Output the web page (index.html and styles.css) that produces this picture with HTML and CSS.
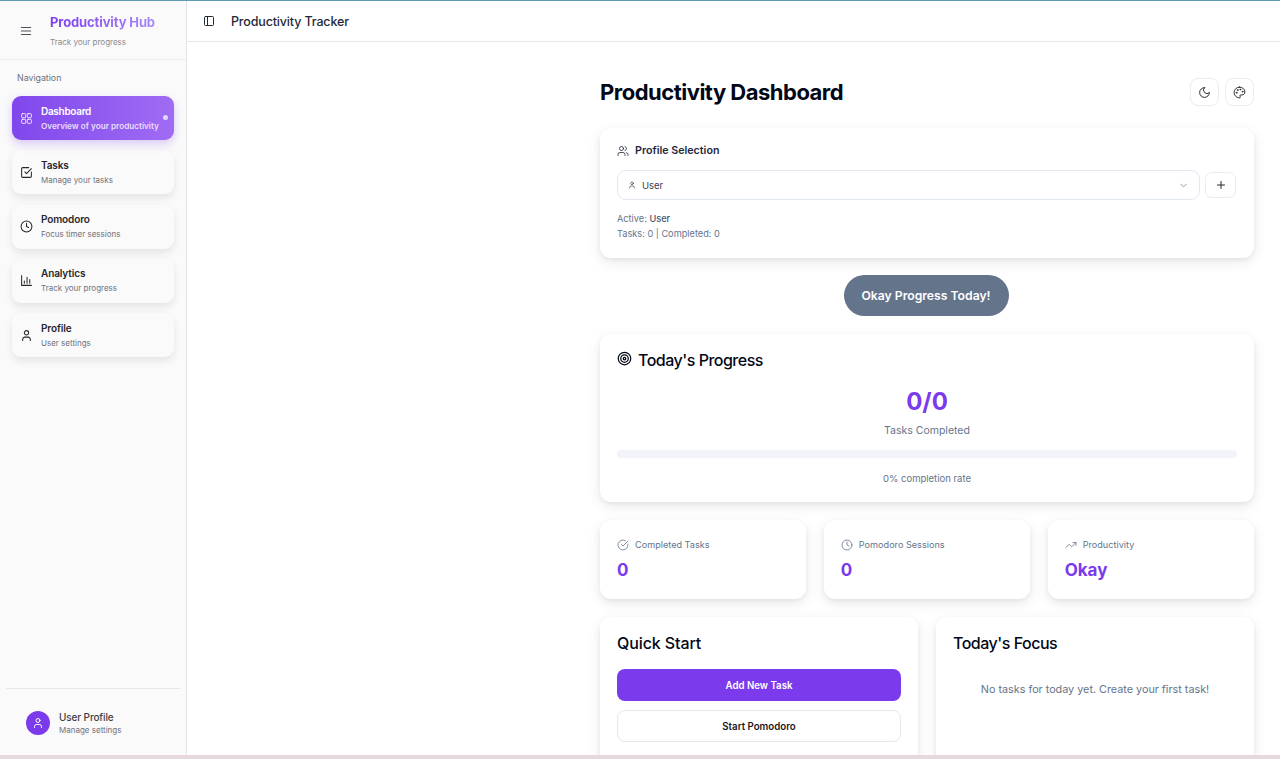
FILE: index.html
```html
<!DOCTYPE html>
<html lang="en">
  <head>
    <meta charset="UTF-8" />
    <meta name="viewport" content="width=device-width, initial-scale=1.0" />
    <title>Productivity Tracker</title>
    <link rel="stylesheet" href="styles.css">
  </head>
  <body>
    <div class="app">
      <aside class="sidebar">
        <div class="brand">
          <svg class="icon brand-menu" viewBox="0 0 24 24"><path d="M4 6h16M4 12h16M4 18h16"/></svg>
          <div>
            <div class="brand-name">Productivity Hub</div>
            <div class="brand-sub">Track your progress</div>
          </div>
        </div>

        <div class="nav-label">Navigation</div>
        <nav class="nav">
          <a href="#" class="nav-item active">
            <svg class="icon" viewBox="0 0 24 24"><rect x="3" y="3" width="7.500" height="7.500" rx="1.500"/><rect x="13.500" y="3" width="7.500" height="7.500" rx="1.500"/><rect x="13.500" y="13.500" width="7.500" height="7.500" rx="1.500"/><rect x="3" y="13.500" width="7.500" height="7.500" rx="1.500"/></svg>
            <span class="nav-text"><b>Dashboard</b><small>Overview of your productivity</small></span>
            <i class="nav-dot"></i>
          </a>
          <a href="#" class="nav-item">
            <svg class="icon" viewBox="0 0 24 24"><path d="M21 11v8a2 2 0 0 1-2 2H5a2 2 0 0 1-2-2V5a2 2 0 0 1 2-2h11"/><path d="m9 11 3 3 9-9"/></svg>
            <span class="nav-text"><b>Tasks</b><small>Manage your tasks</small></span>
          </a>
          <a href="#" class="nav-item">
            <svg class="icon" viewBox="0 0 24 24"><circle cx="12" cy="12" r="10"/><path d="M12 6v6l4 2"/></svg>
            <span class="nav-text"><b>Pomodoro</b><small>Focus timer sessions</small></span>
          </a>
          <a href="#" class="nav-item">
            <svg class="icon" viewBox="0 0 24 24"><path d="M3 3v18h18"/><path d="M8 17v-4M13 17V6M18 17v-7"/></svg>
            <span class="nav-text"><b>Analytics</b><small>Track your progress</small></span>
          </a>
          <a href="#" class="nav-item">
            <svg class="icon" viewBox="0 0 24 24"><path d="M19 21v-2a4 4 0 0 0-4-4H9a4 4 0 0 0-4 4v2"/><circle cx="12" cy="7" r="4"/></svg>
            <span class="nav-text"><b>Profile</b><small>User settings</small></span>
          </a>
        </nav>

        <div class="side-foot">
          <div class="user-row">
            <span class="avatar">
              <svg class="icon" viewBox="0 0 24 24"><path d="M19 21v-2a4 4 0 0 0-4-4H9a4 4 0 0 0-4 4v2"/><circle cx="12" cy="7" r="4"/></svg>
            </span>
            <span class="nav-text"><b>User Profile</b><small>Manage settings</small></span>
          </div>
        </div>
      </aside>

      <div class="main">
        <header class="topbar">
          <svg class="icon" viewBox="0 0 24 24"><rect x="3" y="3" width="18" height="18" rx="2"/><path d="M9 3v18"/></svg>
          <span>Productivity Tracker</span>
        </header>

        <main class="content">
          <div class="page-head">
            <h1>Productivity Dashboard</h1>
            <div class="head-btns">
              <button class="btn-square">
                <svg class="icon" viewBox="0 0 24 24"><path d="M12 3a6 6 0 0 0 9 9 9 9 0 1 1-9-9Z"/></svg>
              </button>
              <button class="btn-square">
                <svg class="icon" viewBox="0 0 24 24"><circle cx="13.5" cy="6.5" r=".8"/><circle cx="17.5" cy="10.5" r=".8"/><circle cx="8.5" cy="7.5" r=".8"/><circle cx="6.5" cy="12.5" r=".8"/><path d="M12 2C6.5 2 2 6.5 2 12s4.5 10 10 10c.9 0 1.6-.7 1.6-1.7 0-.4-.2-.8-.4-1.100-.3-.3-.4-.7-.4-1.100 0-.9.7-1.600 1.700-1.600h2C19.600 16.500 22 14.100 22 11 22 6 17.500 2 12 2Z"/></svg>
              </button>
            </div>
          </div>

          <section class="card profile-card">
            <div class="profile-title">
              <svg class="icon" viewBox="0 0 24 24"><path d="M16 21v-2a4 4 0 0 0-4-4H6a4 4 0 0 0-4 4v2"/><circle cx="9" cy="7" r="4"/><path d="M22 21v-2a4 4 0 0 0-3-3.870M16 3.130a4 4 0 0 1 0 7.750"/></svg>
              Profile Selection
            </div>
            <div class="select-row">
              <div class="select">
                <svg class="icon user-icon" viewBox="0 0 24 24"><path d="M19 21v-2a4 4 0 0 0-4-4H9a4 4 0 0 0-4 4v2"/><circle cx="12" cy="7" r="4"/></svg>
                <span>User</span>
                <svg class="icon chevron" viewBox="0 0 24 24"><path d="m6 9 6 6 6-6"/></svg>
              </div>
              <button class="btn-add">
                <svg class="icon" viewBox="0 0 24 24"><path d="M5 12h14M12 5v14"/></svg>
              </button>
            </div>
            <div class="profile-meta">
              <div>Active: <strong>User</strong></div>
              <div>Tasks: 0 | Completed: 0</div>
            </div>
          </section>

          <div class="pill-row"><div class="pill">Okay Progress Today!</div></div>

          <section class="card progress-card">
            <h2 class="progress-title">
              <svg class="icon" viewBox="0 0 24 24"><circle cx="12" cy="12" r="10"/><circle cx="12" cy="12" r="6"/><circle cx="12" cy="12" r="2"/></svg>
              Today's Progress
            </h2>
            <div class="progress-num">0/0</div>
            <div class="progress-label">Tasks Completed</div>
            <div class="progress-track"></div>
            <div class="progress-rate">0% completion rate</div>
          </section>

          <div class="stats">
            <section class="card stat">
              <div class="stat-label">
                <svg class="icon" viewBox="0 0 24 24"><path d="M21.800 10A10 10 0 1 1 17 3.300"/><path d="m9 11 3 3L22 4"/></svg>
                Completed Tasks
              </div>
              <div class="stat-value">0</div>
            </section>
            <section class="card stat">
              <div class="stat-label">
                <svg class="icon" viewBox="0 0 24 24"><circle cx="12" cy="12" r="10"/><path d="M12 6v6l4 2"/></svg>
                Pomodoro Sessions
              </div>
              <div class="stat-value">0</div>
            </section>
            <section class="card stat">
              <div class="stat-label">
                <svg class="icon" viewBox="0 0 24 24"><path d="m22 7-8.500 8.500-5-5L2 17"/><path d="M16 7h6v6"/></svg>
                Productivity
              </div>
              <div class="stat-value">Okay</div>
            </section>
          </div>

          <div class="bottom-row">
            <section class="card bottom-card">
              <h2>Quick Start</h2>
              <button class="btn-primary">Add New Task</button>
              <button class="btn-outline">Start Pomodoro</button>
            </section>
            <section class="card bottom-card">
              <h2 class="focus-title">Today's Focus</h2>
              <p class="empty">No tasks for today yet. Create your first task!</p>
            </section>
          </div>
        </main>
      </div>
    </div>
  </body>
</html>
```

FILE: styles.css
```css
* {
  box-sizing: border-box;
}

html,
body {
  margin: 0;
  height: 100%;
  overflow: hidden;
}

body {
  font-family: Inter, "Noto Sans", sans-serif;
  color: #0f172a;
  background: #fff;
}

.icon {
  width: 16px;
  height: 16px;
  flex: none;
  fill: none;
  stroke: currentColor;
  stroke-width: 2;
  stroke-linecap: round;
  stroke-linejoin: round;
}

.app {
  display: flex;
  height: 759px;
  border-top: 1px solid #5b9ab5;
  border-bottom: 4px solid #e8d8dc;
  overflow: hidden;
}

/* sidebar */
.sidebar {
  width: 187px;
  flex: none;
  display: flex;
  flex-direction: column;
  background: #fafafa;
  border-right: 1px solid #e5e7eb;
}

.brand {
  height: 59px;
  flex: none;
  display: flex;
  align-items: center;
  gap: 17px;
  padding: 0 0 0 19px;
  border-bottom: 1px solid #ececee;
}

.brand-menu {
  width: 14px;
  height: 14px;
  color: #52525b;
  stroke-width: 1.800;
  margin-top: 1px;
}

.brand-name {
  font-size: 13px;
  font-weight: 700;
  line-height: 18px;
  letter-spacing: -0.12px;
  background: linear-gradient(90deg, #7c3aed, #a78bfa);
  background-clip: text;
  -webkit-background-clip: text;
  color: transparent;
}

.brand-sub {
  font-size: 8px;
  line-height: 12px;
  color: #8b8b93;
  margin-top: 5px;
}

.nav-label {
  font-size: 8.800px;
  font-weight: 400;
  color: #71717a;
  padding: 12px 0 0 17px;
  line-height: 12px;
}

.nav {
  display: flex;
  flex-direction: column;
  gap: 10.300px;
  padding: 12px 12px 0;
}

.nav-item {
  height: 44px;
  display: flex;
  align-items: center;
  gap: 8px;
  padding: 0 8px;
  border-radius: 9px;
  background: #fafafa;
  color: #27272a;
  text-decoration: none;
  box-shadow: 0 4px 8px rgba(0, 0, 0, 0.09);
}

.nav-item .icon {
  width: 13px;
  height: 13px;
  stroke-width: 1.900;
}

.nav-item.active {
  position: relative;
  background: linear-gradient(90deg, #8047ec, #a06cf3);
  color: #fff;
  box-shadow: 0 4px 10px rgba(124, 58, 237, 0.25);
}

.nav-item.active .icon {
  stroke-width: 1.500;
}

.nav-text {
  display: flex;
  flex-direction: column;
  gap: 3px;
  white-space: nowrap;
}

.active .nav-text {
  padding-top: 1px;
}

.nav-text b {
  font-size: 10px;
  font-weight: 600;
  line-height: 13px;
  letter-spacing: -0.12px;
}

.nav-text small {
  font-size: 8px;
  line-height: 11px;
  color: #71717a;
}

.active .nav-text b {
  letter-spacing: -0.3px;
}

.active .nav-text small {
  color: #e9defc;
  font-size: 8.200px;
  font-weight: 600;
}

.nav-dot {
  position: absolute;
  right: 6px;
  top: 19px;
  width: 5px;
  height: 5px;
  border-radius: 50%;
  background: #e3d5fb;
}

.side-foot {
  margin: auto 6px 0;
  height: 67px;
  padding-top: 12px;
  border-top: 1px solid #e5e7eb;
}

.user-row {
  display: flex;
  align-items: center;
  gap: 9px;
  height: 44px;
  padding-left: 20px;
}

.avatar {
  width: 24px;
  height: 24px;
  flex: none;
  display: flex;
  align-items: center;
  justify-content: center;
  border-radius: 50%;
  background: #7c3aed;
  color: #fff;
}

.avatar .icon {
  width: 12px;
  height: 12px;
}

.user-row .nav-text {
  gap: 1px;
}

.user-row b {
  font-weight: 500;
  color: #3f3f46;
}

/* main area */
.main {
  flex: 1;
  min-width: 0;
  display: flex;
  flex-direction: column;
}

.topbar {
  height: 41px;
  flex: none;
  display: flex;
  align-items: center;
  gap: 16px;
  padding: 0 16px;
  border-bottom: 1px solid #e5e7eb;
  font-size: 12.500px;
  font-weight: 500;
  letter-spacing: -0.15px;
  color: #1f2937;
}

.topbar .icon {
  width: 12px;
  height: 12px;
}

.content {
  width: 654px;
  margin-left: 413px;
}

.page-head {
  display: flex;
  align-items: center;
  justify-content: space-between;
  height: 86px;
  padding-top: 14px;
}

h1 {
  margin: 0;
  font-size: 22px;
  font-weight: 700;
  letter-spacing: -0.5px;
  color: #020817;
}

.head-btns {
  display: flex;
  gap: 6px;
}

.btn-square {
  width: 29px;
  height: 28px;
  display: flex;
  align-items: center;
  justify-content: center;
  padding: 0;
  border: 1px solid #ececf0;
  border-radius: 8px;
  background: #fff;
  color: #27272a;
}

.btn-square .icon {
  width: 13px;
  height: 13px;
  stroke-width: 1.800;
}

.card {
  background: #fff;
  border-radius: 11px;
  box-shadow: 0 4px 14px rgba(0, 0, 0, 0.09), 0 2px 4px rgba(0, 0, 0, 0.05);
}

.profile-card {
  height: 130px;
  padding: 16px 18px 0 17px;
}

.profile-title {
  display: flex;
  align-items: center;
  gap: 6px;
  font-size: 10.700px;
  font-weight: 600;
  line-height: 14px;
  color: #1e293b;
}

.profile-title .icon {
  width: 12px;
  height: 12px;
  stroke-width: 1.600;
}

.select-row {
  display: flex;
  align-items: center;
  gap: 5px;
  margin-top: 12px;
}

.select {
  flex: 1;
  height: 30px;
  display: flex;
  align-items: center;
  gap: 6px;
  padding: 0 10px;
  border: 1px solid #e2e8f0;
  border-radius: 9px;
  font-size: 9.500px;
  color: #334155;
}

.user-icon {
  width: 8px;
  height: 8px;
}

.chevron {
  width: 11px;
  height: 11px;
  margin-left: auto;
  color: #8a94a3;
}

.btn-add {
  width: 31px;
  height: 26px;
  display: flex;
  align-items: center;
  justify-content: center;
  padding: 0;
  border: 1px solid #ececf0;
  border-radius: 7px;
  background: #fff;
  color: #27272a;
}

.btn-add .icon {
  width: 12px;
  height: 12px;
}

.profile-meta {
  margin-top: 11px;
  font-size: 9.200px;
  line-height: 15px;
  color: #64748b;
}

.profile-meta strong {
  font-weight: 500;
  color: #475569;
}

.pill-row {
  display: flex;
  justify-content: center;
  margin-top: 17px;
  padding-right: 2px;
}

.pill {
  width: 165px;
  height: 41px;
  display: flex;
  align-items: center;
  justify-content: center;
  border-radius: 21px;
  background: #64748b;
  color: #fff;
  font-size: 12.200px;
  font-weight: 600;
  white-space: nowrap;
}

.progress-card {
  height: 168px;
  margin-top: 18px;
  padding: 15px 17px 0;
  text-align: center;
}

.progress-title {
  display: flex;
  align-items: center;
  gap: 6px;
  margin: 0;
  font-size: 16px;
  font-weight: 500;
  line-height: 22px;
  letter-spacing: -0.5px;
  color: #020817;
  text-align: left;
}

.progress-title .icon {
  width: 15px;
  height: 15px;
  margin-top: -3px;
}

.progress-num {
  margin-top: 15px;
  font-size: 24px;
  font-weight: 700;
  line-height: 32px;
  color: #7c3aed;
}

.progress-label {
  margin-top: 6px;
  font-size: 10.500px;
  line-height: 14px;
  color: #64748b;
}

.progress-track {
  height: 8px;
  margin-top: 12px;
  border-radius: 4px;
  background: #f1f5f9;
}

.progress-rate {
  margin-top: 14px;
  font-size: 9.500px;
  line-height: 13px;
  color: #64748b;
}

.stats {
  display: grid;
  grid-template-columns: repeat(3, 1fr);
  gap: 17.500px;
  margin-top: 18px;
}

.stat {
  height: 79px;
  padding: 18px 17px 0;
}

.stat-label {
  display: flex;
  align-items: center;
  gap: 6px;
  font-size: 9.150px;
  line-height: 14px;
  color: #64748b;
}

.stat-label .icon {
  width: 12px;
  height: 12px;
  stroke-width: 1.600;
}

.stat-value {
  margin-top: 6px;
  font-size: 17px;
  font-weight: 700;
  line-height: 24px;
  color: #7c3aed;
}

.bottom-row {
  display: grid;
  grid-template-columns: repeat(2, 1fr);
  gap: 18px;
  margin-top: 18px;
}

.bottom-card {
  height: 170px;
  padding: 15px 17px 0;
}

.bottom-card h2 {
  margin: 0;
  font-size: 16px;
  font-weight: 500;
  line-height: 22px;
  letter-spacing: -0.1px;
  color: #020817;
}

.bottom-card .focus-title {
  letter-spacing: -0.5px;
}

.btn-primary,
.btn-outline {
  display: block;
  width: 100%;
  height: 32px;
  padding: 0;
  border-radius: 8px;
  font-family: inherit;
  font-size: 9.700px;
  font-weight: 600;
}

.btn-primary {
  margin-top: 15px;
  border: 0;
  background: #7c3aed;
  color: #fff;
}

.btn-outline {
  margin-top: 9px;
  border: 1px solid #e8e8ec;
  background: #fff;
  color: #18181b;
}

.empty {
  margin: 29px 0 0;
  text-align: center;
  font-size: 10.800px;
  line-height: 14px;
  color: #64748b;
}
```
